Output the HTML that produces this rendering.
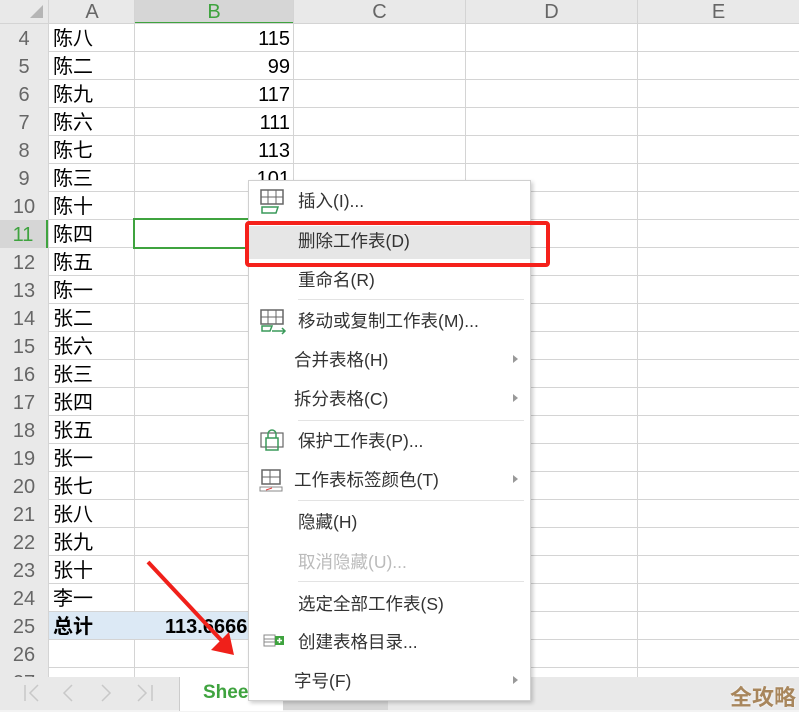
<!DOCTYPE html>
<html><head><meta charset="utf-8"><style>
*{margin:0;padding:0;box-sizing:border-box}
body{width:799px;height:712px;overflow:hidden;background:#fff;position:relative;font-family:"Liberation Sans","Noto Sans CJK SC",sans-serif}
.a{position:absolute}
.hl{position:absolute;left:0;width:799px;height:1px;background:#d4d4d4}
.vl{position:absolute;top:0;width:1px;height:677px;background:#d4d4d4}
.rn{position:absolute;left:0;width:48px;height:28px;background:#e9e9e9;color:#666;font-size:20px;text-align:center;line-height:30px;overflow:hidden}
.ca{position:absolute;left:53px;font-size:20px;line-height:30px;color:#000}
.cb{position:absolute;left:135px;width:155px;text-align:right;font-size:20px;line-height:30px;color:#000}
.mi{position:absolute;left:298px;font-size:17.5px;color:#333;line-height:22px}
.sep{position:absolute;left:298px;width:226px;height:1px;background:#e3e3e3}
.tri{position:absolute;left:513px;width:0;height:0;border-top:4px solid transparent;border-bottom:4px solid transparent;border-left:5px solid #999}
.hd{position:absolute;top:0;text-align:center;font-size:20px;color:#666;line-height:24px}
</style></head><body>
<div class="a" style="left:0;top:0;width:799px;height:24px;background:#e9e9e9"></div>
<div class="a" style="left:135px;top:0;width:158px;height:24px;background:#d6d6d6;border-bottom:2px solid #3fa33f"></div>
<div class="a" style="left:30px;top:5px;width:0;height:0;border-left:13px solid transparent;border-bottom:13px solid #b5b5b5"></div>
<div class="hd" style="left:49px;width:86px">A</div>
<div class="hd" style="left:135px;width:158px;color:#3fa33f">B</div>
<div class="hd" style="left:294px;width:171px">C</div>
<div class="hd" style="left:466px;width:171px">D</div>
<div class="hd" style="left:638px;width:161px">E</div>
<div class="vl" style="left:48px"></div><div class="vl" style="left:134px"></div><div class="vl" style="left:293px"></div><div class="vl" style="left:465px"></div><div class="vl" style="left:637px"></div>
<div class="hl" style="top:23px"></div><div class="hl" style="top:51px"></div><div class="hl" style="top:79px"></div><div class="hl" style="top:107px"></div><div class="hl" style="top:135px"></div><div class="hl" style="top:163px"></div><div class="hl" style="top:191px"></div><div class="hl" style="top:219px"></div><div class="hl" style="top:247px"></div><div class="hl" style="top:275px"></div><div class="hl" style="top:303px"></div><div class="hl" style="top:331px"></div><div class="hl" style="top:359px"></div><div class="hl" style="top:387px"></div><div class="hl" style="top:415px"></div><div class="hl" style="top:443px"></div><div class="hl" style="top:471px"></div><div class="hl" style="top:499px"></div><div class="hl" style="top:527px"></div><div class="hl" style="top:555px"></div><div class="hl" style="top:583px"></div><div class="hl" style="top:611px"></div><div class="hl" style="top:639px"></div><div class="hl" style="top:667px"></div>
<div class="a" style="left:49px;top:612px;width:200px;height:27px;background:#dce9f5"></div>
<div class="rn" style="top:24px">4</div><div class="rn" style="top:52px">5</div><div class="rn" style="top:80px">6</div><div class="rn" style="top:108px">7</div><div class="rn" style="top:136px">8</div><div class="rn" style="top:164px">9</div><div class="rn" style="top:192px">10</div><div class="rn" style="top:220px;background:#d6d6d6;color:#3fa33f;border-right:2px solid #3fa33f">11</div><div class="rn" style="top:248px">12</div><div class="rn" style="top:276px">13</div><div class="rn" style="top:304px">14</div><div class="rn" style="top:332px">15</div><div class="rn" style="top:360px">16</div><div class="rn" style="top:388px">17</div><div class="rn" style="top:416px">18</div><div class="rn" style="top:444px">19</div><div class="rn" style="top:472px">20</div><div class="rn" style="top:500px">21</div><div class="rn" style="top:528px">22</div><div class="rn" style="top:556px">23</div><div class="rn" style="top:584px">24</div><div class="rn" style="top:612px">25</div><div class="rn" style="top:640px">26</div><div class="rn" style="top:668px;height:10px">27</div>
<div class="ca" style="top:24px">陈八</div><div class="ca" style="top:52px">陈二</div><div class="ca" style="top:80px">陈九</div><div class="ca" style="top:108px">陈六</div><div class="ca" style="top:136px">陈七</div><div class="ca" style="top:164px">陈三</div><div class="ca" style="top:192px">陈十</div><div class="ca" style="top:220px">陈四</div><div class="ca" style="top:248px">陈五</div><div class="ca" style="top:276px">陈一</div><div class="ca" style="top:304px">张二</div><div class="ca" style="top:332px">张六</div><div class="ca" style="top:360px">张三</div><div class="ca" style="top:388px">张四</div><div class="ca" style="top:416px">张五</div><div class="ca" style="top:444px">张一</div><div class="ca" style="top:472px">张七</div><div class="ca" style="top:500px">张八</div><div class="ca" style="top:528px">张九</div><div class="ca" style="top:556px">张十</div><div class="ca" style="top:584px">李一</div><div class="ca" style="top:612px;font-weight:bold">总计</div>
<div class="cb" style="top:24px">115</div><div class="cb" style="top:52px">99</div><div class="cb" style="top:80px">117</div><div class="cb" style="top:108px">111</div><div class="cb" style="top:136px">113</div><div class="cb" style="top:164px">101</div>
<div class="a" style="left:165px;top:612px;font-size:20px;font-weight:bold;line-height:30px">113.6666</div>
<div class="a" style="left:133px;top:218px;width:160px;height:31px;border:2px solid #3fa33f"></div>
<div class="a" style="left:0;top:677px;width:799px;height:33px;background:#e9e9e9"></div>
<div class="a" style="left:0;top:710px;width:799px;height:2px;background:#f3f3f3"></div>
<svg class="a" style="left:0;top:677px" width="180" height="33"><g fill="none" stroke="#c8c8c8" stroke-width="1.5"><path d="M25 8 V24 M38 8 L30 16 L38 24"/><path d="M72 8 L64 16 L72 24"/><path d="M102 8 L110 16 L102 24"/><path d="M138 8 L146 16 L138 24 M152 8 V24"/></g></svg>
<div class="a" style="left:179px;top:677px;width:104px;height:34px;background:#fff;border-left:1px solid #ccc"></div>
<div class="a" style="left:283px;top:677px;width:105px;height:33px;background:#d6d6d6"></div>
<div class="a" style="left:203px;top:682px;font-size:19px;font-weight:bold;color:#3fa33f">Sheet1</div>
<div class="a" style="left:730px;top:680px;font-size:22px;font-weight:bold;color:#a8865c;text-shadow:0 0 2px #fff">全攻略</div>
<svg class="a" style="left:0;top:0" width="799" height="712"><line x1="148" y1="562" x2="222" y2="641" stroke="#f0201a" stroke-width="4"/><polygon points="234,655 211,650 229,632" fill="#f0201a"/></svg>
<div class="a" style="left:248px;top:180px;width:283px;height:521px;background:#fff;border:1px solid #d0d0d0;box-shadow:2px 2px 4px rgba(0,0,0,.2)"></div>
<div class="a" style="left:249px;top:226px;width:281px;height:33px;background:#e6e6e6"></div>
<div class="a" style="left:245px;top:221px;width:305px;height:46px;border:4px solid #f5211b;border-radius:4px"></div>
<svg class="a" style="left:258px;top:188px" width="30" height="30"><rect x="3" y="2" width="22" height="14" fill="none" stroke="#666" stroke-width="1.5"/><line x1="3" y1="9" x2="25" y2="9" stroke="#666"/><line x1="10" y1="2" x2="10" y2="16" stroke="#666"/><line x1="18" y1="2" x2="18" y2="16" stroke="#666"/><path d="M4 19 H20 L18 25 H4Z" fill="none" stroke="#3a9a5a" stroke-width="1.5"/></svg>
<svg class="a" style="left:258px;top:308px" width="30" height="30"><rect x="3" y="2" width="22" height="14" fill="none" stroke="#666" stroke-width="1.5"/><line x1="3" y1="9" x2="25" y2="9" stroke="#666"/><line x1="10" y1="2" x2="10" y2="16" stroke="#666"/><line x1="18" y1="2" x2="18" y2="16" stroke="#666"/><path d="M4 18 H14 L12 23 H4Z" fill="none" stroke="#3a9a5a" stroke-width="1.5"/><path d="M14 23 H27 M24 20 L27 23 L24 26" fill="none" stroke="#3a9a5a" stroke-width="1.5"/></svg>
<svg class="a" style="left:258px;top:428px" width="30" height="30"><rect x="3" y="5" width="22" height="14" fill="none" stroke="#666" stroke-width="1.2"/><rect x="8" y="10" width="12" height="12" fill="none" stroke="#3a9a5a" stroke-width="1.5"/><path d="M10 10 V6 a4 4 0 0 1 8 0 V10" fill="none" stroke="#3a9a5a" stroke-width="1.5"/></svg>
<svg class="a" style="left:258px;top:467px" width="30" height="30"><rect x="4" y="3" width="18" height="14" fill="none" stroke="#666" stroke-width="1.5"/><line x1="4" y1="10" x2="22" y2="10" stroke="#666"/><line x1="12" y1="3" x2="12" y2="17" stroke="#666"/><rect x="2" y="20" width="22" height="4" fill="none" stroke="#888"/><line x1="8" y1="23" x2="14" y2="21" stroke="#e04040"/></svg>
<svg class="a" style="left:263px;top:633px" width="22" height="16"><rect x="1" y="2" width="11" height="11" fill="none" stroke="#888"/><line x1="1" y1="6" x2="12" y2="6" stroke="#888"/><line x1="1" y1="9" x2="12" y2="9" stroke="#888"/><rect x="12" y="3" width="9" height="9" fill="#3fa33f"/><path d="M16.5 5 V10 M14 7.5 H19" stroke="#fff" stroke-width="1.5"/></svg>
<div class="mi" style="top:190px">插入(I)...</div>
<div class="mi" style="top:230px">删除工作表(D)</div>
<div class="mi" style="top:269px">重命名(R)</div>
<div class="sep" style="top:299px"></div>
<div class="mi" style="top:310px">移动或复制工作表(M)...</div>
<div class="mi" style="top:349px;left:294px">合并表格(H)</div><div class="tri" style="top:355px"></div>
<div class="mi" style="top:388px;left:294px">拆分表格(C)</div><div class="tri" style="top:394px"></div>
<div class="sep" style="top:420px"></div>
<div class="mi" style="top:430px">保护工作表(P)...</div>
<div class="mi" style="top:469px;left:294px">工作表标签颜色(T)</div><div class="tri" style="top:475px"></div>
<div class="sep" style="top:500px"></div>
<div class="mi" style="top:511px">隐藏(H)</div>
<div class="mi" style="top:551px;color:#bbb">取消隐藏(U)...</div>
<div class="sep" style="top:581px"></div>
<div class="mi" style="top:593px">选定全部工作表(S)</div>
<div class="mi" style="top:631px">创建表格目录...</div>
<div class="mi" style="top:670px;left:294px">字号(F)</div><div class="tri" style="top:676px"></div>
</body></html>
